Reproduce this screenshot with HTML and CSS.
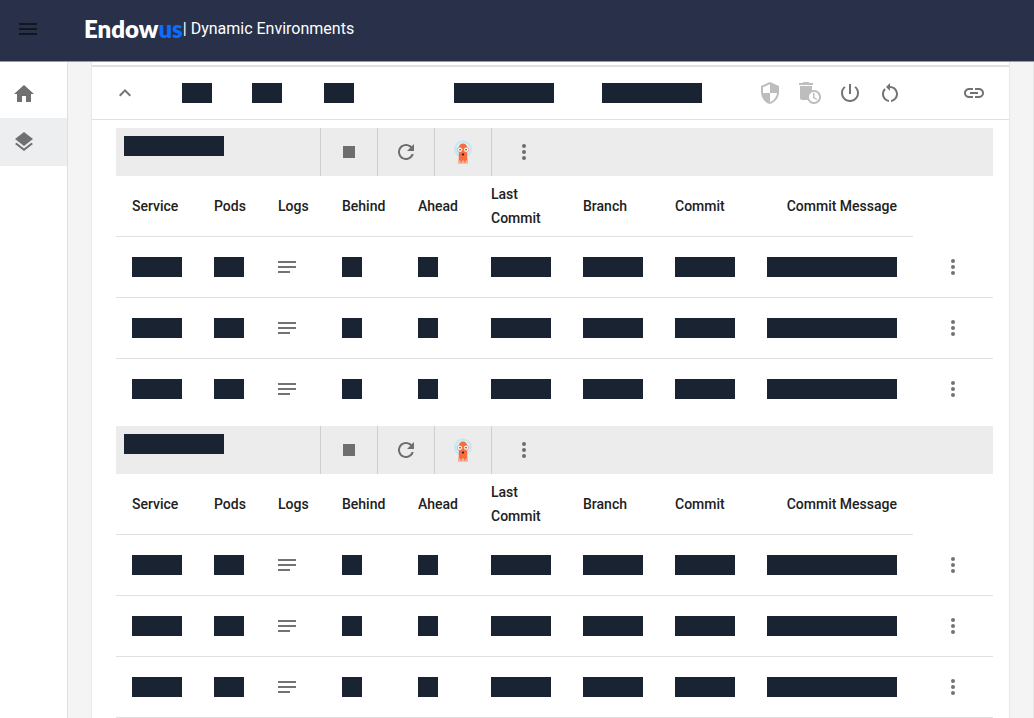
FILE: index.html
```html
<!DOCTYPE html>
<html lang="en">
<head>
<meta charset="utf-8">
<title>Endowus | Dynamic Environments</title>
<link rel="stylesheet" href="styles.css">
</head>
<body>
<svg class="sprite" aria-hidden="true">
  <symbol id="menu" viewBox="0 0 24 24"><path d="M3 18h18v-2H3v2zm0-5h18v-2H3v2zm0-7v2h18V6H3z"/></symbol>
  <symbol id="home" viewBox="0 0 24 24"><path d="M10 20v-6h4v6h5v-8h3L12 3 2 12h3v8z"/></symbol>
  <symbol id="layers" viewBox="0 0 24 24"><path d="M11.99 18.54l-7.37-5.73L3 14.07l9 7 9-7-1.63-1.27-7.38 5.74zM12 16l7.36-5.73L21 9l-9-7-9 7 1.63 1.27L12 16z"/></symbol>
  <symbol id="collapse" viewBox="0 0 24 24"><path d="M12 8l-6 6 1.41 1.41L12 10.83l4.59 4.58L18 14z"/></symbol>
  <symbol id="shield" viewBox="0 0 24 24"><path d="M12 1L3 5v6c0 5.55 3.84 10.74 9 12 5.16-1.26 9-6.45 9-12V5l-9-4zm0 10.99h7c-.53 4.12-3.28 7.79-7 8.94V12H5V6.3l7-3.11v8.8z"/></symbol>
  <symbol id="autodelete" viewBox="0 0 24 24"><path d="M15 2h-3.500l-1-1h-5l-1 1H1v2h14z"/><path fill-rule="evenodd" d="M16 9c-.7 0-1.37.1-2 .29V5H2v12c0 1.100.9 2 2 2h5.680C10.800 21.360 13.210 23 16 23c3.870 0 7-3.130 7-7s-3.130-7-7-7zm0 12c-2.760 0-5-2.240-5-5s2.240-5 5-5 5 2.240 5 5-2.240 5-5 5z"/><path d="M16.500 12H15v5l3.600 2.100.8-1.200-2.900-1.700z"/></symbol>
  <symbol id="power" viewBox="0 0 24 24"><path d="M13 3h-2v10h2V3zm4.830 2.170l-1.420 1.420C17.990 7.860 19 9.810 19 12c0 3.870-3.130 7-7 7s-7-3.130-7-7c0-2.190 1.010-4.140 2.580-5.420L6.170 5.170C4.230 6.820 3 9.260 3 12c0 4.970 4.030 9 9 9s9-4.030 9-9c0-2.740-1.230-5.180-3.170-6.830z"/></symbol>
  <symbol id="restart" viewBox="0 0 24 24"><path d="M12 5V2L8 6l4 4V7c3.310 0 6 2.690 6 6 0 2.970-2.170 5.430-5 5.910v2.020c3.950-.49 7-3.850 7-7.930 0-4.420-3.580-8-8-8zM6 13c0-1.650.67-3.150 1.760-4.240L6.340 7.340C4.900 8.790 4 10.790 4 13c0 4.080 3.050 7.440 7 7.930v-2.020c-2.830-.48-5-2.940-5-5.910z"/></symbol>
  <symbol id="link" viewBox="0 0 24 24"><path d="M3.9 12c0-1.71 1.39-3.1 3.1-3.1h4V7H7c-2.76 0-5 2.24-5 5s2.24 5 5 5h4v-1.9H7c-1.71 0-3.1-1.39-3.1-3.1zM8 13h8v-2H8v2zm9-6h-4v1.9h4c1.71 0 3.1 1.39 3.1 3.1s-1.39 3.1-3.1 3.1h-4V17h4c2.76 0 5-2.24 5-5s-2.240-5-5-5z"/></symbol>
  <symbol id="stop" viewBox="0 0 24 24"><path d="M6 6h12v12H6z"/></symbol>
  <symbol id="refresh" viewBox="0 0 24 24"><path d="M17.65 6.35C16.2 4.9 14.21 4 12 4c-4.42 0-7.99 3.58-7.99 8s3.57 8 7.99 8c3.73 0 6.84-2.55 7.73-6h-2.08c-.82 2.33-3.04 4-5.65 4-3.31 0-6-2.69-6-6s2.69-6 6-6c1.66 0 3.14.69 4.22 1.78L13 11h7V4l-2.35 2.35z"/></symbol>
  <symbol id="more" viewBox="0 0 24 24"><circle cx="12" cy="6" r="2"/><circle cx="12" cy="12" r="2"/><circle cx="12" cy="18" r="2"/></symbol>
  <symbol id="notes" viewBox="3 0 18 24"><path d="M3 6h18v2H3zM3 11h18v2H3zM3 16h12v2H3z"/></symbol>
  <symbol id="argo" viewBox="0 0 24 24">
    <circle cx="12" cy="9.200" r="9" fill="#cfe6f1"/>
    <circle cx="12" cy="9.200" r="7.200" fill="#def3f6" stroke="#bbdfeb" stroke-width=".6"/>
    <path d="M7.800 8c0-3 1.800-4.500 4.200-4.500S16.200 5 16.200 8v10.500c0 1.800.4 3.300.9 4.700H6.900c.5-1.400.9-2.900.9-4.700z" fill="#fb6c3c"/>
    <path d="M7.600 20.500h8.900l.6 2.900H6.900z" fill="#f6b49d"/>
    <path d="M9.400 19h1.400v3.500H9.400zM13.200 19h1.400v3.500h-1.400z" fill="#fb6c3c"/>
    <circle cx="8.800" cy="9.700" r="2.500" fill="#fff" stroke="#e9683f" stroke-width=".6"/>
    <circle cx="15.200" cy="9.700" r="2.500" fill="#fff" stroke="#e9683f" stroke-width=".6"/>
    <circle cx="9" cy="9.700" r=".8" fill="#202838"/>
    <circle cx="15" cy="9.700" r=".8" fill="#202838"/>
    <ellipse cx="12" cy="14.500" rx="1.200" ry="1" fill="#221c25"/>
  </symbol>
</svg>

<header class="topbar">
  <button class="icon-button menu-button" aria-label="Menu"><svg class="icon"><use href="#menu"/></svg></button>
  <div class="brand"><span class="logo">Endow<span class="logo-accent">us</span></span><span class="title">| Dynamic Environments</span></div>
</header>

<div class="shell">
  <nav class="sidebar">
    <a class="nav-item" href="#" aria-label="Home"><svg class="icon"><use href="#home"/></svg></a>
    <a class="nav-item active" href="#" aria-label="Environments"><svg class="icon"><use href="#layers"/></svg></a>
  </nav>
  <main class="main">
    <section class="panel">
      <div class="env-row">
        <div class="env-toggle"><button class="icon-button" aria-label="Collapse"><svg class="icon"><use href="#collapse"/></svg></button></div>
        <div class="env-cell"><span class="mask w30"></span></div>
        <div class="env-cell"><span class="mask w30"></span></div>
        <div class="env-cell"><span class="mask w30"></span></div>
        <div class="env-cell"><span class="mask w100"></span></div>
        <div class="env-cell"><span class="mask w100"></span></div>
        <div class="env-actions">
          <button class="icon-button" aria-label="Protect" disabled><svg class="icon"><use href="#shield"/></svg></button>
          <button class="icon-button" aria-label="Auto delete" disabled><svg class="icon"><use href="#autodelete"/></svg></button>
          <button class="icon-button" aria-label="Power"><svg class="icon"><use href="#power"/></svg></button>
          <button class="icon-button" aria-label="Restart"><svg class="icon"><use href="#restart"/></svg></button>
        </div>
        <a class="icon-button" href="#" aria-label="Link"><svg class="icon"><use href="#link"/></svg></a>
      </div>

      <div class="groups">
        <section class="group">
          <div class="toolbar">
            <div class="group-name"><span class="mask w100"></span></div>
            <button class="tool" aria-label="Stop"><svg class="icon"><use href="#stop"/></svg></button>
            <button class="tool" aria-label="Refresh"><svg class="icon"><use href="#refresh"/></svg></button>
            <button class="tool" aria-label="Argo"><svg class="icon"><use href="#argo"/></svg></button>
            <button class="tool more" aria-label="More"><svg class="icon"><use href="#more"/></svg></button>
          </div>
          <table class="services">
            <colgroup><col class="c-service"><col class="c-small"><col class="c-small"><col class="c-behind"><col class="c-ahead"><col class="c-medium"><col class="c-medium"><col class="c-medium"><col class="c-message"><col></colgroup>
            <thead><tr><th>Service</th><th>Pods</th><th>Logs</th><th>Behind</th><th>Ahead</th><th>Last Commit</th><th>Branch</th><th>Commit</th><th class="right">Commit Message</th><td></td></tr></thead>
            <tbody>
              <tr><td><span class="mask w50"></span></td><td><span class="mask w30"></span></td><td><button class="log-button" aria-label="Logs"><svg class="notes"><use href="#notes"/></svg></button></td><td><span class="mask w20"></span></td><td><span class="mask w20"></span></td><td><span class="mask w60"></span></td><td><span class="mask w60"></span></td><td><span class="mask w60"></span></td><td><span class="mask w130"></span></td><td class="row-menu"><button class="icon-button" aria-label="More"><svg class="icon"><use href="#more"/></svg></button></td></tr>
              <tr><td><span class="mask w50"></span></td><td><span class="mask w30"></span></td><td><button class="log-button" aria-label="Logs"><svg class="notes"><use href="#notes"/></svg></button></td><td><span class="mask w20"></span></td><td><span class="mask w20"></span></td><td><span class="mask w60"></span></td><td><span class="mask w60"></span></td><td><span class="mask w60"></span></td><td><span class="mask w130"></span></td><td class="row-menu"><button class="icon-button" aria-label="More"><svg class="icon"><use href="#more"/></svg></button></td></tr>
              <tr><td><span class="mask w50"></span></td><td><span class="mask w30"></span></td><td><button class="log-button" aria-label="Logs"><svg class="notes"><use href="#notes"/></svg></button></td><td><span class="mask w20"></span></td><td><span class="mask w20"></span></td><td><span class="mask w60"></span></td><td><span class="mask w60"></span></td><td><span class="mask w60"></span></td><td><span class="mask w130"></span></td><td class="row-menu"><button class="icon-button" aria-label="More"><svg class="icon"><use href="#more"/></svg></button></td></tr>
            </tbody>
          </table>
        </section>

        <section class="group">
          <div class="toolbar">
            <div class="group-name"><span class="mask w100"></span></div>
            <button class="tool" aria-label="Stop"><svg class="icon"><use href="#stop"/></svg></button>
            <button class="tool" aria-label="Refresh"><svg class="icon"><use href="#refresh"/></svg></button>
            <button class="tool" aria-label="Argo"><svg class="icon"><use href="#argo"/></svg></button>
            <button class="tool more" aria-label="More"><svg class="icon"><use href="#more"/></svg></button>
          </div>
          <table class="services">
            <colgroup><col class="c-service"><col class="c-small"><col class="c-small"><col class="c-behind"><col class="c-ahead"><col class="c-medium"><col class="c-medium"><col class="c-medium"><col class="c-message"><col></colgroup>
            <thead><tr><th>Service</th><th>Pods</th><th>Logs</th><th>Behind</th><th>Ahead</th><th>Last Commit</th><th>Branch</th><th>Commit</th><th class="right">Commit Message</th><td></td></tr></thead>
            <tbody>
              <tr><td><span class="mask w50"></span></td><td><span class="mask w30"></span></td><td><button class="log-button" aria-label="Logs"><svg class="notes"><use href="#notes"/></svg></button></td><td><span class="mask w20"></span></td><td><span class="mask w20"></span></td><td><span class="mask w60"></span></td><td><span class="mask w60"></span></td><td><span class="mask w60"></span></td><td><span class="mask w130"></span></td><td class="row-menu"><button class="icon-button" aria-label="More"><svg class="icon"><use href="#more"/></svg></button></td></tr>
              <tr><td><span class="mask w50"></span></td><td><span class="mask w30"></span></td><td><button class="log-button" aria-label="Logs"><svg class="notes"><use href="#notes"/></svg></button></td><td><span class="mask w20"></span></td><td><span class="mask w20"></span></td><td><span class="mask w60"></span></td><td><span class="mask w60"></span></td><td><span class="mask w60"></span></td><td><span class="mask w130"></span></td><td class="row-menu"><button class="icon-button" aria-label="More"><svg class="icon"><use href="#more"/></svg></button></td></tr>
              <tr><td><span class="mask w50"></span></td><td><span class="mask w30"></span></td><td><button class="log-button" aria-label="Logs"><svg class="notes"><use href="#notes"/></svg></button></td><td><span class="mask w20"></span></td><td><span class="mask w20"></span></td><td><span class="mask w60"></span></td><td><span class="mask w60"></span></td><td><span class="mask w60"></span></td><td><span class="mask w130"></span></td><td class="row-menu"><button class="icon-button" aria-label="More"><svg class="icon"><use href="#more"/></svg></button></td></tr>
            </tbody>
          </table>
        </section>
      </div>
    </section>
  </main>
</div>
</body>
</html>
```
FILE: styles.css
```css
* { box-sizing: border-box; }

body {
  margin: 0;
  min-height: 100vh;
  display: flex;
  flex-direction: column;
  font-family: Roboto, "Liberation Sans", sans-serif;
  background: #f4f4f4;
  color: #212121;
}

.sprite { display: none; }

.icon {
  display: block;
  width: 24px;
  height: 24px;
  fill: currentColor;
}

button {
  border: 0;
  padding: 0;
  background: none;
  font: inherit;
  cursor: pointer;
}

.icon-button {
  display: grid;
  place-items: center;
  width: 40px;
  height: 40px;
  color: #737373;
}

.icon-button:disabled { color: #bdbdbd; }

/* Top bar */
.topbar {
  display: flex;
  align-items: center;
  height: 62px;
  padding: 0 8px 4px;
  background: #283149;
  border-bottom: 1px solid #9799a1;
  color: #fff;
}

.topbar .menu-button { color: #12171f; }

.brand {
  display: flex;
  align-items: center;
  margin-left: 36px;
}

.logo {
  font: 800 24px/32px Lato, sans-serif;
}

.logo-accent { color: #0b6cff; }

.title {
  font-size: 16px;
  line-height: 32px;
}

/* Layout */
.shell {
  display: flex;
  flex: 1;
}

.sidebar {
  flex: none;
  width: 68px;
  padding-top: 8px;
  background: #fff;
  border-right: 1px solid #dfdfdf;
}

.nav-item {
  display: flex;
  align-items: center;
  height: 48px;
  padding-left: 12px;
  color: #707070;
}

.nav-item.active { background: #edeef0; }

.main {
  display: flex;
  flex: 1;
  min-width: 0;
  padding: 0 23px;
  border-right: 1px solid #e8e8e8;
}

.panel {
  flex: 1;
  min-width: 0;
  padding-top: 3px;
  background: #fff;
  border-left: 1px solid #e8e8e8;
  border-right: 1px solid #e8e8e8;
}

/* Environment summary */
.env-row {
  display: grid;
  grid-template-columns: 66px 70px 72px 130px 148px 1fr 204px 55px;
  align-items: center;
  height: 55px;
  border-top: 2px solid #e0e0e0;
  border-bottom: 1px solid #e0e0e0;
}

.env-toggle { padding-left: 13px; }
.env-cell { padding-left: 24px; }
.env-actions { display: flex; }

.mask {
  display: block;
  height: 20px;
  background: #1a2332;
}

.w20 { width: 20px; }
.w30 { width: 30px; }
.w50 { width: 50px; }
.w60 { width: 60px; }
.w100 { width: 100px; }
.w130 { width: 130px; }

/* Service groups */
.groups {
  display: grid;
  gap: 7px;
  padding: 8px 16px 0 24px;
}

.toolbar {
  display: flex;
  height: 48px;
  background: #ececec;
}

.group-name {
  width: 204px;
  padding: 8px;
}

.tool {
  display: grid;
  place-items: center;
  width: 57px;
  border-left: 1px solid #cecece;
  color: #6e6e6e;
}

.tool.more { width: 65px; }

.services {
  width: 100%;
  table-layout: fixed;
  border-collapse: separate;
  border-spacing: 0;
}

.c-service { width: 82px; }
.c-small { width: 64px; }
.c-behind { width: 76px; }
.c-ahead { width: 73px; }
.c-medium { width: 92px; }
.c-message { width: 162px; }

th, td {
  height: 61px;
  padding: 0 16px;
  text-align: left;
  vertical-align: middle;
}

th {
  font-size: 14px;
  font-weight: 500;
  line-height: 24px;
}

th, tbody td { border-bottom: 1px solid #e0e0e0; }

.right { text-align: right; }

.group:not(:last-child) tbody tr:last-child td {
  height: 60px;
  border-bottom: 0;
}

.log-button { display: block; }

.notes {
  display: block;
  width: 18px;
  height: 24px;
  fill: #737373;
}

.row-menu .icon-button { margin: 0 auto; }
```
